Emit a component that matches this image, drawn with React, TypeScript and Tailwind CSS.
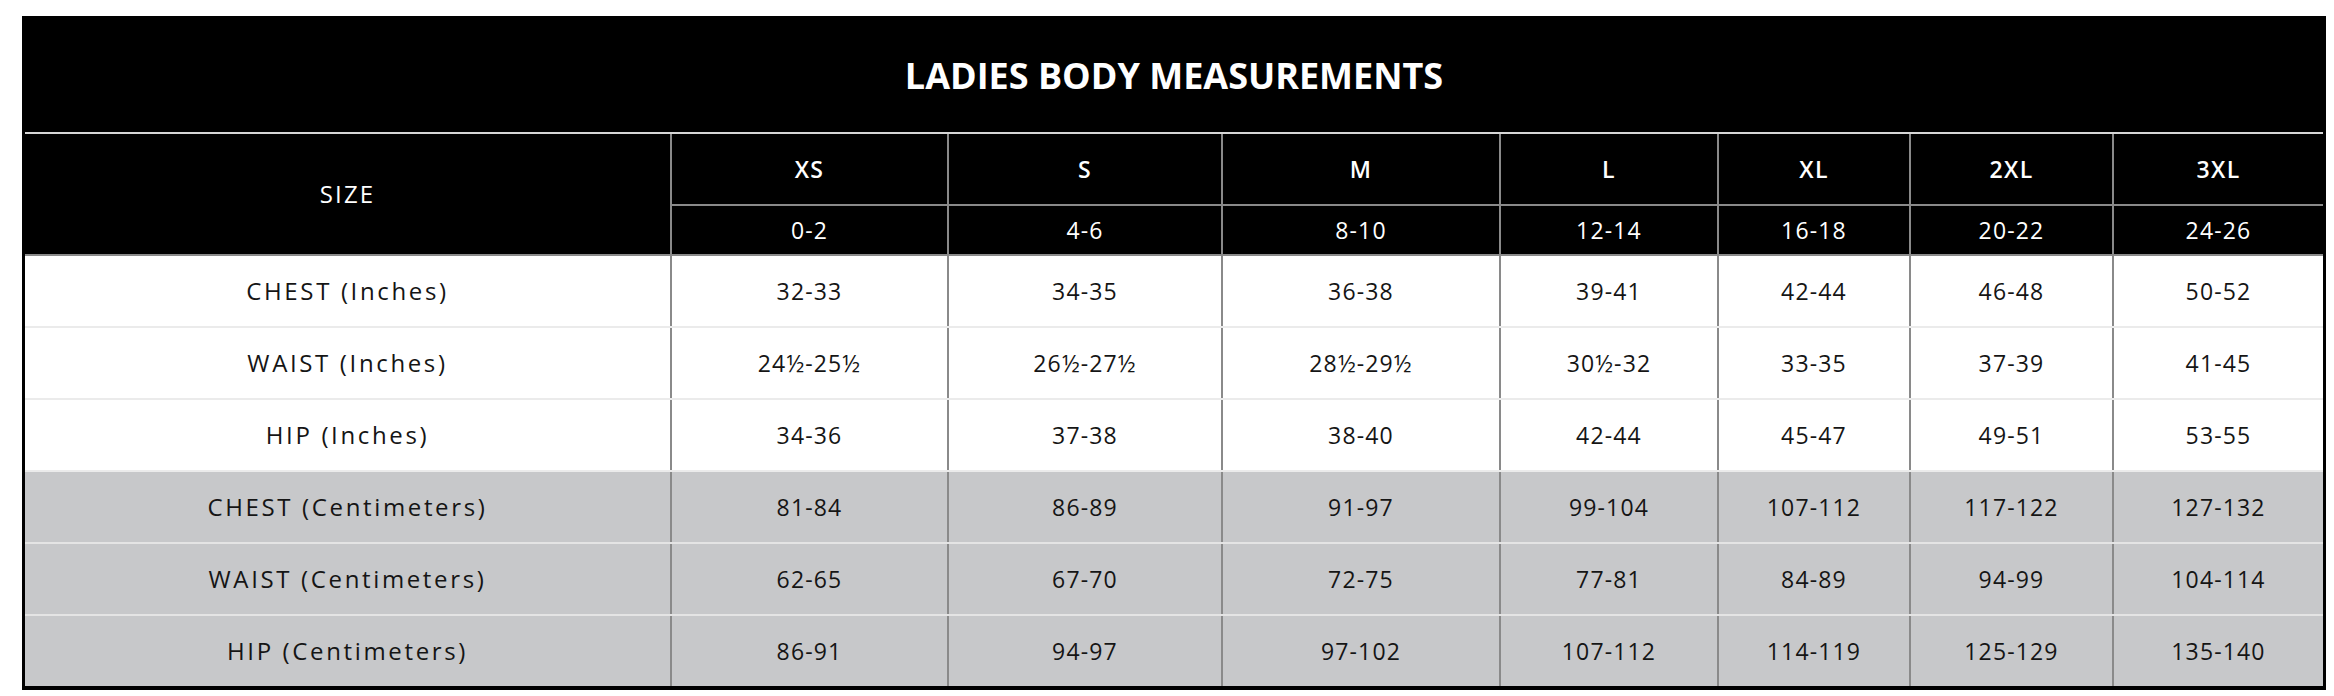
import React from "react";

const sizes = ["XS", "S", "M", "L", "XL", "2XL", "3XL"];
const us = ["0-2", "4-6", "8-10", "12-14", "16-18", "20-22", "24-26"];

const rows: { label: string; values: string[]; gray: boolean }[] = [
  { label: "CHEST (Inches)", values: ["32-33", "34-35", "36-38", "39-41", "42-44", "46-48", "50-52"], gray: false },
  { label: "WAIST (Inches)", values: ["24½-25½", "26½-27½", "28½-29½", "30½-32", "33-35", "37-39", "41-45"], gray: false },
  { label: "HIP (Inches)", values: ["34-36", "37-38", "38-40", "42-44", "45-47", "49-51", "53-55"], gray: false },
  { label: "CHEST (Centimeters)", values: ["81-84", "86-89", "91-97", "99-104", "107-112", "117-122", "127-132"], gray: true },
  { label: "WAIST (Centimeters)", values: ["62-65", "67-70", "72-75", "77-81", "84-89", "94-99", "104-114"], gray: true },
  { label: "HIP (Centimeters)", values: ["86-91", "94-97", "97-102", "107-112", "114-119", "125-129", "135-140"], gray: true },
];

const cols = "grid grid-cols-[645px_277px_274px_278px_218px_192px_203px_211px]";

export default function App() {
  return (
    <div className="min-h-screen bg-white pt-[16px] pl-[22px]" style={{ fontFamily: '"Open Sans", "Noto Sans", sans-serif' }}>
      <div className="w-[2304px] border-[3px] border-b-4 border-black bg-black">
        <div className="flex h-[115px] items-center justify-center border-b-2 border-[#d6d6d6] text-[36px] font-bold text-white">
          LADIES BODY MEASUREMENTS
        </div>
        <div className={`${cols} border-b-2 border-[#8a8a8a] text-white`}>
          <div className="row-span-2 flex items-center justify-center text-[24px] tracking-[0.09em]">SIZE</div>
          {sizes.map((s) => (
            <div key={s} className="flex h-[72px] items-center justify-center border-b-2 border-l-2 border-[#8a8a8a] text-[23px] font-semibold tracking-[0.06em]">
              {s}
            </div>
          ))}
          {us.map((u) => (
            <div key={u} className="flex h-[48px] items-center justify-center border-l-2 border-[#8a8a8a] text-[23px] tracking-[0.05em]">
              {u}
            </div>
          ))}
        </div>
        {rows.map((r, i) => (
          <div
            key={r.label}
            className={`${cols} ${r.gray ? "bg-[#c7c8ca]" : "bg-white"} ${i < rows.length - 1 ? (r.gray ? "border-b-2 border-[#e4e4e4]" : "border-b-2 border-[#ebebeb]") : ""} text-[#151515]`}
          >
            <div className="flex h-[70px] items-center justify-center text-[24px] font-medium tracking-[0.11em]">{r.label}</div>
            {r.values.map((v, j) => (
              <div key={j} className="flex h-[70px] items-center justify-center border-l-2 border-[#8a8a8a] text-[23px] tracking-[0.05em]">
                {v}
              </div>
            ))}
          </div>
        ))}
      </div>
    </div>
  );
}
